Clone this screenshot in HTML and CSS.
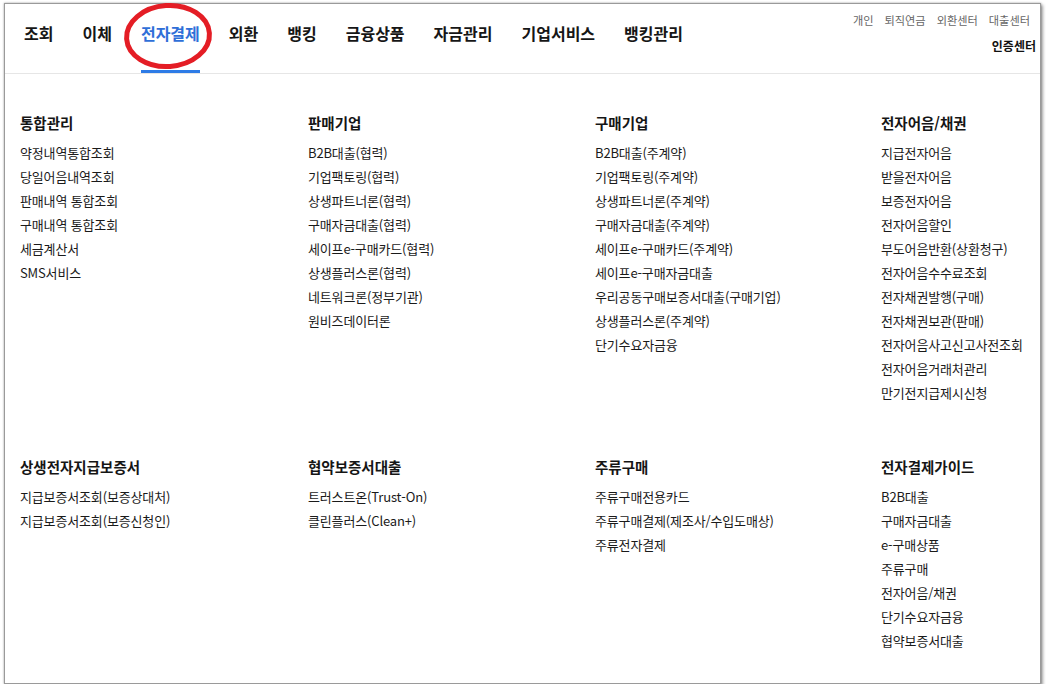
FILE: index.html
```html
<!DOCTYPE html>
<html lang="ko">
<head>
<meta charset="utf-8">
<title>전자결제</title>
<link rel="stylesheet" href="styles.css">
</head>
<body>
<div class="frame">
  <header class="header">
    <nav class="gnb">
      <a class="gnb-item">조회</a>
      <a class="gnb-item">이체</a>
      <a class="gnb-item active">전자결제</a>
      <a class="gnb-item">외환</a>
      <a class="gnb-item">뱅킹</a>
      <a class="gnb-item">금융상품</a>
      <a class="gnb-item">자금관리</a>
      <a class="gnb-item">기업서비스</a>
      <a class="gnb-item">뱅킹관리</a>
    </nav>
    <div class="side">
      <ul class="util">
        <li>개인</li>
        <li>퇴직연금</li>
        <li>외환센터</li>
        <li>대출센터</li>
      </ul>
      <div class="cert">인증센터</div>
    </div>
  </header>

  <main class="menu">
    <section class="group">
      <h3 class="group-title">통합관리</h3>
      <ul class="links">
        <li>약정내역통합조회</li>
        <li>당일어음내역조회</li>
        <li>판매내역 통합조회</li>
        <li>구매내역 통합조회</li>
        <li>세금계산서</li>
        <li>SMS서비스</li>
      </ul>
    </section>
    <section class="group">
      <h3 class="group-title">판매기업</h3>
      <ul class="links">
        <li>B2B대출(협력)</li>
        <li>기업팩토링(협력)</li>
        <li>상생파트너론(협력)</li>
        <li>구매자금대출(협력)</li>
        <li>세이프e-구매카드(협력)</li>
        <li>상생플러스론(협력)</li>
        <li>네트워크론(정부기관)</li>
        <li>원비즈데이터론</li>
      </ul>
    </section>
    <section class="group">
      <h3 class="group-title">구매기업</h3>
      <ul class="links">
        <li>B2B대출(주계약)</li>
        <li>기업팩토링(주계약)</li>
        <li>상생파트너론(주계약)</li>
        <li>구매자금대출(주계약)</li>
        <li>세이프e-구매카드(주계약)</li>
        <li>세이프e-구매자금대출</li>
        <li>우리공동구매보증서대출(구매기업)</li>
        <li>상생플러스론(주계약)</li>
        <li>단기수요자금융</li>
      </ul>
    </section>
    <section class="group">
      <h3 class="group-title">전자어음/채권</h3>
      <ul class="links">
        <li>지급전자어음</li>
        <li>받을전자어음</li>
        <li>보증전자어음</li>
        <li>전자어음할인</li>
        <li>부도어음반환(상환청구)</li>
        <li>전자어음수수료조회</li>
        <li>전자채권발행(구매)</li>
        <li>전자채권보관(판매)</li>
        <li>전자어음사고신고사전조회</li>
        <li>전자어음거래처관리</li>
        <li>만기전지급제시신청</li>
      </ul>
    </section>

    <section class="group">
      <h3 class="group-title">상생전자지급보증서</h3>
      <ul class="links">
        <li>지급보증서조회(보증상대처)</li>
        <li>지급보증서조회(보증신청인)</li>
      </ul>
    </section>
    <section class="group">
      <h3 class="group-title">협약보증서대출</h3>
      <ul class="links">
        <li>트러스트온(Trust-On)</li>
        <li>클린플러스(Clean+)</li>
      </ul>
    </section>
    <section class="group">
      <h3 class="group-title">주류구매</h3>
      <ul class="links">
        <li>주류구매전용카드</li>
        <li>주류구매결제(제조사/수입도매상)</li>
        <li>주류전자결제</li>
      </ul>
    </section>
    <section class="group">
      <h3 class="group-title">전자결제가이드</h3>
      <ul class="links">
        <li>B2B대출</li>
        <li>구매자금대출</li>
        <li>e-구매상품</li>
        <li>주류구매</li>
        <li>전자어음/채권</li>
        <li>단기수요자금융</li>
        <li>협약보증서대출</li>
      </ul>
    </section>
  </main>

  <svg class="mark" width="100" height="80" viewBox="0 0 100 80" aria-hidden="true">
    <ellipse cx="50" cy="40" rx="41.5" ry="30.5" fill="none" stroke="#e41d25" stroke-width="5" transform="rotate(-4 50 40)"/>
  </svg>
</div>
</body>
</html>
```

FILE: styles.css
```css
* { box-sizing: border-box; }

html, body {
  margin: 0;
  padding: 0;
  background: #ffffff;
  overflow: hidden;
}

body {
  font-family: "Noto Sans CJK KR", "Noto Sans", sans-serif;
  color: #1c1c1c;
}

.frame {
  position: relative;
  margin: 3px 0 0 4px;
  width: 1037px;
  height: 681px;
  border: 1px solid #9a9a9a;
  box-shadow: 0 0 2px rgba(0,0,0,0.35), 2px 2px 3px rgba(0,0,0,0.35);
  background: #fff;
}

.header {
  display: flex;
  justify-content: space-between;
  align-items: flex-start;
  height: 70px;
  border-bottom: 1px solid #e6e6e6;
  padding-left: 19px;
}

.gnb {
  display: flex;
  gap: 29px;
}

.gnb-item {
  display: block;
  height: 69px;
  padding-top: 18px;
  line-height: 22px;
  font-size: 16px;
  font-weight: 700;
  color: #161616;
  border-bottom: 3px solid transparent;
  cursor: pointer;
}

.gnb-item.active {
  color: #2f6fd8;
  border-bottom-color: #2d7be6;
}

.side {
  display: flex;
  flex-direction: column;
  align-items: flex-end;
  padding-top: 9px;
  padding-right: 4px;
}

.util {
  list-style: none;
  margin: 0;
  padding: 0 6px 0 0;
  display: flex;
  gap: 11px;
  font-size: 11.2px;
  line-height: 14px;
  color: #666;
}

.cert {
  margin-top: 11px;
  font-size: 12px;
  line-height: 16px;
  font-weight: 700;
  color: #111;
}

.menu {
  display: grid;
  grid-template-columns: 288px 287px 286px 1fr;
  row-gap: 52px;
  padding: 39px 0 0 15px;
}

.group-title {
  margin: 0 0 8px;
  font-size: 14.5px;
  line-height: 20px;
  font-weight: 700;
  color: #151515;
}

.links {
  list-style: none;
  margin: 0;
  padding: 0;
}

.links li {
  font-size: 13px;
  letter-spacing: -0.15px;
  line-height: 24px;
  color: #1a1a1a;
  white-space: nowrap;
}

.mark {
  position: absolute;
  left: 113px;
  top: -8px;
  pointer-events: none;
}
```
